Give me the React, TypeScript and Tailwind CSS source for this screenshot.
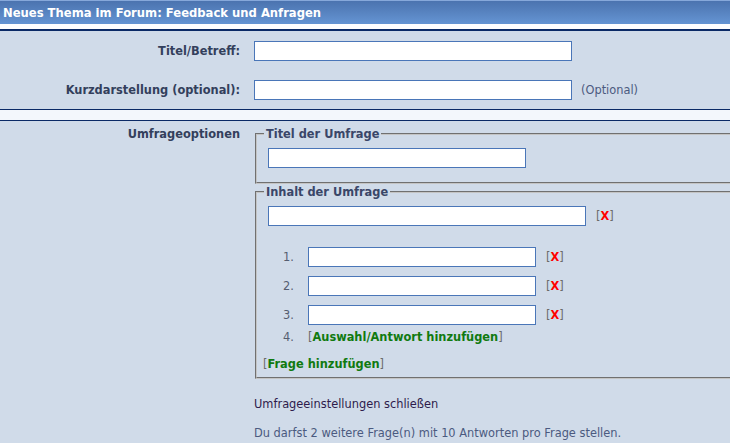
import React from "react";

const font = { fontFamily: '"DejaVu Sans", Verdana, sans-serif' };

function Field({ width }: { width: string }) {
  return <input type="text" className={`h-[20px] ${width} border border-[#4a76b8] bg-white`} />;
}

function RemoveLink() {
  return (
    <span className="text-[#6b6b6b]">
      [<span className="font-bold text-[#ff0000]">X</span>]
    </span>
  );
}

function AddLink({ label }: { label: string }) {
  return (
    <span className="text-[#6b6b6b]">
      [<span className="font-bold text-[#107a10]">{label}</span>]
    </span>
  );
}

export default function App() {
  const answers = [1, 2, 3];

  return (
    <div className="h-[443px] w-[730px] overflow-hidden bg-[#d0dbe9] text-[11.4px] leading-[16px] text-[#333f5c]" style={font}>
      <div className="flex h-[24px] items-center border-t border-[#86a8da] bg-gradient-to-b from-[#4b73af] to-[#6595d3] pl-[3px] text-[11.6px] font-bold text-white">
        Neues Thema im Forum: Feedback und Anfragen
      </div>
      <div className="h-[5px] bg-white" />
      <div className="h-[2px] bg-[#0b2a66]" />

      <div className="grid grid-cols-[254px_1fr] items-center gap-y-[19px] pt-[10px] pb-[9px]">
        <div className="pr-[14px] text-right font-bold">Titel/Betreff:</div>
        <div>
          <Field width="w-[318px]" />
        </div>
        <div className="pr-[14px] text-right font-bold">Kurzdarstellung (optional):</div>
        <div className="flex items-center gap-[9px]">
          <Field width="w-[318px]" />
          <span className="text-[#4b5a80]">(Optional)</span>
        </div>
      </div>

      <div className="h-[12px] border-y border-[#0b2a66] bg-[#f3f7fc]" />

      <div className="grid grid-cols-[254px_1fr]">
        <div className="pt-[5px] pr-[14px] text-right font-bold">Umfrageoptionen</div>
        <div className="pt-[5px]">
          <fieldset className="ml-[1px] w-[500px] border-2 border-[#c4c4c4] px-[11px] pt-[6px] pb-[14px] [border-style:groove]">
            <legend className="-ml-[4px] px-[2px] font-bold text-[#3a4668]">Titel der Umfrage</legend>
            <Field width="w-[258px]" />
          </fieldset>

          <fieldset className="ml-[1px] w-[500px] border-2 border-[#c4c4c4] px-[11px] pt-[6px] pb-[5px] [border-style:groove]">
            <legend className="-ml-[4px] px-[2px] font-bold text-[#3a4668]">Inhalt der Umfrage</legend>
            <div className="flex items-center gap-[10px]">
              <Field width="w-[318px]" />
              <RemoveLink />
            </div>

            <div className="mt-[21px] flex flex-col gap-[9px] pl-[15px]">
              {answers.map((n) => (
                <div key={n} className="flex items-center">
                  <span className="w-[25px] text-[#555d70]">{n}.</span>
                  <Field width="w-[228px]" />
                  <span className="ml-[10px]">
                    <RemoveLink />
                  </span>
                </div>
              ))}
              <div className="-mt-[5px] flex items-center">
                <span className="w-[25px] text-[#555d70]">4.</span>
                <AddLink label="Auswahl/Antwort hinzufügen" />
              </div>
            </div>

            <div className="mt-[11px] -ml-[5px]">
              <AddLink label="Frage hinzufügen" />
            </div>
          </fieldset>

          <div className="mt-[17px] text-[#2e1c4c]">Umfrageeinstellungen schließen</div>
          <div className="mt-[13px] text-[#4b5a80]">
            Du darfst 2 weitere Frage(n) mit 10 Antworten pro Frage stellen.
          </div>
        </div>
      </div>
    </div>
  );
}
